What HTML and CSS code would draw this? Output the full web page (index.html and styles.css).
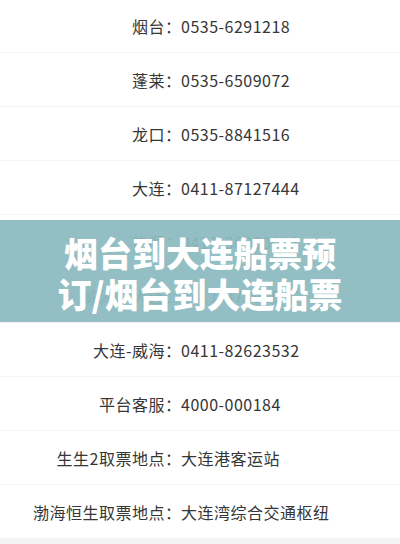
FILE: index.html
```html
<!DOCTYPE html>
<html lang="zh-CN">
<head>
    <meta charset="UTF-8">
    <meta name="viewport" content="width=device-width, initial-scale=1.0">
    <title>烟台到大连船票预订</title>
    <link rel="stylesheet" href="styles.css">
</head>
<body>
    <div class="contact-list">
        <div class="row"><span class="label">烟台：</span><span class="value">0535-6291218</span></div>
        <div class="row"><span class="label">蓬莱：</span><span class="value">0535-6509072</span></div>
        <div class="row"><span class="label">龙口：</span><span class="value">0535-8841516</span></div>
        <div class="row"><span class="label">大连：</span><span class="value">0411-87127444</span></div>
        <div class="row"><span class="label">旅顺：</span><span class="value">0411-86380008</span></div>
        <div class="row"><span class="label">威海、大连：</span><span class="value">0411-87990066</span></div>
        <div class="row"><span class="label">大连-威海：</span><span class="value">0411-82623532</span></div>
        <div class="row"><span class="label">平台客服：</span><span class="value">4000-000184</span></div>
        <div class="row"><span class="label">生生2取票地点：</span><span class="value">大连港客运站</span></div>
        <div class="row"><span class="label">渤海恒生取票地点：</span><span class="value">大连湾综合交通枢纽</span></div>
    </div>

    <div class="banner">
        <h1>烟台到大连船票预<br>订/烟台到大连船票</h1>
    </div>
</body>
</html>
```

FILE: styles.css
```css
body {
    font-family: 'Noto Sans CJK SC', 'Noto Sans', sans-serif;
    background-color: #f4f4f4;
    margin: 0;
    height: 544px;
    overflow: hidden;
    position: relative;
}
.contact-list {
    margin-top: -1px;
    display: flex;
    flex-direction: column;
    gap: 1px;
}
.row {
    background-color: #fff;
    height: 53px;
    display: grid;
    grid-template-columns: 181px 1fr;
    align-items: center;
    font-size: 16px;
    letter-spacing: 0.5px;
    color: #363636;
}
.label {
    text-align: right;
    white-space: nowrap;
    margin-right: -0.5px;
}
.value {
    white-space: nowrap;
}
.banner {
    position: absolute;
    left: 0;
    right: 0;
    top: 220px;
    height: 102px;
    background-color: rgba(140, 186, 191, 0.94);
    display: flex;
    align-items: center;
    justify-content: center;
}
.banner h1 {
    margin: 0;
    padding-top: 4px;
    color: #fff;
    font-size: 34px;
    font-weight: 900;
    line-height: 41px;
    text-align: center;
}
```
